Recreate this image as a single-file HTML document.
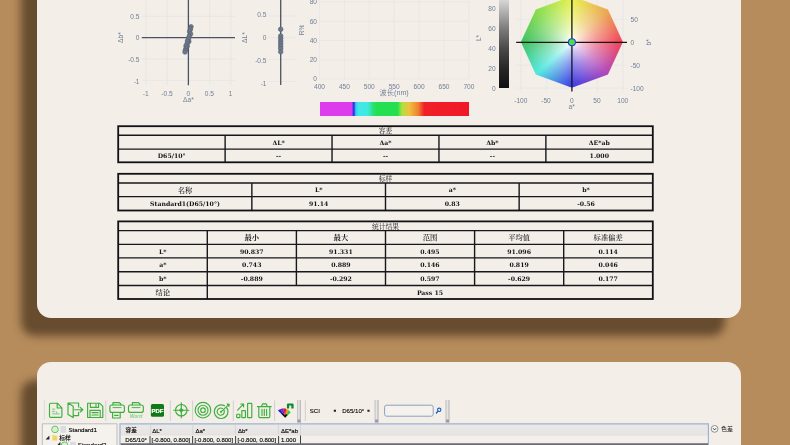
<!DOCTYPE html>
<html lang="zh">
<head>
<meta charset="utf-8">
<title>Color report</title>
<style>
html,body{margin:0;padding:0;}
body{width:790px;height:445px;overflow:hidden;background:#b68c5c;position:relative;font-family:"Liberation Sans","Noto Sans CJK SC",sans-serif;}
.card{position:absolute;background:#f3eee8;border-radius:14px;box-shadow:-16px 18px 9px rgba(30,18,5,0.52);}
#c1{left:37px;top:-40px;width:704px;height:358px;}
#c2{left:37px;top:362px;width:704px;height:140px;}
svg.full{position:absolute;left:0;top:0;width:790px;height:445px;overflow:hidden;will-change:transform;}
.ax{font-family:"Liberation Sans","Noto Sans CJK SC",sans-serif;font-size:6.6px;fill:#6f7f97;}
.tc{font-family:"DejaVu Serif","Liberation Serif","Noto Serif CJK SC",serif;font-weight:bold;font-size:6.2px;fill:#15151a;text-anchor:middle;}
.tt{font-family:"Liberation Serif","Noto Serif CJK SC",serif;font-size:6.8px;fill:#15151a;text-anchor:middle;}
.cj{font-family:"Liberation Serif","Noto Serif CJK SC",serif;font-weight:500;font-size:7.3px;fill:#15151a;text-anchor:middle;}
.cjb{font-family:"Liberation Serif","Noto Serif CJK SC",serif;font-size:7.3px;font-weight:bold;fill:#15151a;text-anchor:middle;}
#oct{position:absolute;left:520.9px;top:-8.7px;width:102px;height:102px;transform:scaleY(0.898);transform-origin:50% 50%;
 clip-path:polygon(50% 0,85.36% 14.64%,100% 50%,85.36% 85.36%,50% 100%,14.64% 85.36%,0 50%,14.64% 14.64%);
 background:radial-gradient(circle at 50% 50%,rgba(255,255,255,1) 0,rgba(255,255,255,0.74) 14%,rgba(255,255,255,0.47) 34%,rgba(255,255,255,0.17) 62%,rgba(255,255,255,0) 92%),
 conic-gradient(from 0deg,#e4ee30 0deg,#e89c38 45deg,#ee2840 90deg,#a42cb0 135deg,#2020e0 180deg,#38e4dc 225deg,#20b848 270deg,#78d834 315deg,#e4ee30 360deg);}
#lbar{position:absolute;left:498.5px;top:-12px;width:10.4px;height:99.8px;background:linear-gradient(to bottom,#fff 0,#d6d6d6 12%,#7e7e7e 40%,#4b4b4b 60%,#272727 80%,#101010 100%);}
#spec{position:absolute;left:319.7px;top:101.8px;width:149.2px;height:14px;
 background:linear-gradient(to right,#dc3cec 0,#dc3cec 21.6%,#2030e0 22.2%,#2848e8 23%,#38c8f0 24%,#40e8e8 26%,#40e8e0 32%,#28e070 36%,#22e050 38%,#22e050 52%,#b0e040 55%,#f0c040 60%,#f08030 66%,#f02028 70%,#f01828 100%);}
</style>
</head>
<body>
<div class="card" id="c1"></div>
<div class="card" id="c2"></div>
<svg class="full" viewBox="0 0 790 445">
<!-- chart 1 -->
<g stroke="#e4e2e4" stroke-width="0.7" fill="none">
<path d="M146 -10V85M167.2 -10V85M209.6 -10V85M230.8 -10V85"/>
<path d="M142 16.3H235M142 59H235M142 80.4H235"/>
<path d="M268 16H296M268 37.6H296M268 59.5H296M268 81.5H296"/>
</g>
<g stroke="#4a5365" stroke-width="1.3" fill="none">
<path d="M141.8 37.6H235M188.4 -5V85.3"/>
<path d="M280.7 -5V85"/>
</g>
<g fill="#6d7888" stroke="#566072" stroke-width="0.6">
<circle cx="191" cy="26.8" r="2.3"/><circle cx="190.4" cy="29.2" r="2.3"/><circle cx="189.6" cy="31.6" r="2.3"/><circle cx="190.6" cy="34" r="2.3"/><circle cx="189.2" cy="36.4" r="2.3"/><circle cx="188.6" cy="38.8" r="2.3"/><circle cx="188.8" cy="41.6" r="2.3"/><circle cx="187.4" cy="41" r="2.3"/><circle cx="187.2" cy="43.6" r="2.3"/><circle cx="187.2" cy="46.2" r="2.3"/><circle cx="186" cy="45.8" r="2.3"/><circle cx="186" cy="48.4" r="2.3"/><circle cx="185.4" cy="50.4" r="2.3"/><circle cx="185" cy="52" r="2.3"/>
<circle cx="280.7" cy="29.3" r="2.3"/><circle cx="280.7" cy="36" r="2.3"/><circle cx="280.7" cy="38.5" r="2.3"/><circle cx="280.7" cy="41" r="2.3"/><circle cx="280.7" cy="43.5" r="2.3"/><circle cx="280.7" cy="46" r="2.3"/><circle cx="280.7" cy="48.5" r="2.3"/><circle cx="280.7" cy="51.8" r="2.3"/>
</g>
<g class="ax" text-anchor="end">
<text x="139.5" y="18.8">0.5</text><text x="139.5" y="40">0</text><text x="139.5" y="62.3">-0.5</text><text x="139.5" y="83.8">-1</text>
<text x="266.5" y="17.1">0.5</text><text x="266.5" y="40">0</text><text x="266.5" y="62.6">-0.5</text><text x="266.5" y="86">-1</text>
</g>
<g class="ax" text-anchor="middle">
<text x="145.8" y="96">-1</text><text x="167" y="96">-0.5</text><text x="188.4" y="96">0</text><text x="209.4" y="96">0.5</text><text x="230.6" y="96">1</text>
<text x="188.4" y="102">Δa*</text>
<text transform="translate(123.4 37.6) rotate(-90)">Δb*</text>
<text transform="translate(247.2 37.6) rotate(-90)">ΔL*</text>
</g>
<!-- chart 3 spectrum -->
<g stroke="#e6e4e6" stroke-width="0.7" fill="none">
<path d="M319.5 -5V79M344.4 -5V79M369.3 -5V79M394.2 -5V79M419.1 -5V79M444 -5V79M468.9 -5V79"/>
<path d="M319.5 2H469M319.5 21.3H469M319.5 40.5H469M319.5 59.7H469M319.5 79H469"/>
</g>
<g class="ax" text-anchor="end">
<text x="317" y="4.4">80</text><text x="317" y="23.7">60</text><text x="317" y="42.9">40</text><text x="317" y="62.1">20</text><text x="317" y="81.4">0</text>
</g>
<g class="ax" text-anchor="middle">
<text x="319.5" y="89">400</text><text x="344.4" y="89">450</text><text x="369.3" y="89">500</text><text x="394.2" y="89">550</text><text x="419.1" y="89">600</text><text x="444" y="89">650</text><text x="468.9" y="89">700</text>
<text x="394.2" y="95.2" font-size="7.2">波长(nm)</text>
<text transform="translate(304 30) rotate(-90)">R%</text>
</g>
<!-- chart 4 lab -->
<g class="ax" text-anchor="end">
<text x="495.6" y="11">80</text><text x="495.6" y="30.8">60</text><text x="495.6" y="50.8">40</text><text x="495.6" y="70.8">20</text><text x="495.6" y="90.7">0</text>
</g>
<g stroke="#e6e4e6" stroke-width="0.7" fill="none">
<path d="M520.9 -5V92M546.4 -5V92M597.4 -5V92M622.9 -5V92"/>
<path d="M516 19.4H627M516 65.2H627M516 88.1H627"/>
</g>
<g class="ax" text-anchor="middle">
<text x="520.8" y="102.9">-100</text><text x="546" y="102.9">-50</text><text x="571.9" y="102.9">0</text><text x="596.9" y="102.9">50</text><text x="622.8" y="102.9">100</text>
<text x="571.7" y="108.6">a*</text>
<text transform="translate(480.8 38) rotate(-90)">L*</text>
<text transform="translate(651.4 42.3) rotate(-90)">b*</text>
</g>
<g class="ax" text-anchor="start">
<text x="630.5" y="21.8">50</text><text x="630.5" y="44.7">0</text><text x="630.5" y="67.6">-50</text><text x="630.5" y="90.5">-100</text>
</g>
</svg>
<div id="oct"></div>
<div id="lbar"></div>
<div id="spec"></div>
<svg class="full" viewBox="0 0 790 445">
<g stroke="#15151a" stroke-width="1.3" fill="none"><path d="M516.2 42.3H627M571.9 -5V91.6"/></g>
<circle cx="571.9" cy="42.3" r="3.5" fill="#48e040" stroke="#2838e0" stroke-width="1.1"/>
</svg>
<svg class="full" viewBox="0 0 790 445">
<path d="M118.2 135.2H652.8M118.2 149.1H652.8" stroke="#17171c" stroke-width="1.4" fill="none"/>
<path d="M225.12 135.2V162.3M332.04 135.2V162.3M438.96 135.2V162.3M545.88 135.2V162.3" stroke="#17171c" stroke-width="1.4" fill="none"/>
<rect x="118.2" y="126.2" width="534.5999999999999" height="36.10000000000001" stroke="#111116" stroke-width="1.8" fill="none"/>
<text class="tt" x="385.5" y="133.2">容差</text>

<text class="tc" x="278.6" y="144.7">ΔL*</text>
<text class="tc" x="385.5" y="144.7">Δa*</text>
<text class="tc" x="492.4" y="144.7">Δb*</text>
<text class="tc" x="599.3" y="144.7">ΔE*ab</text>
<text class="tc" x="171.7" y="158.3">D65/10°</text>
<text class="tc" x="278.6" y="158.3">--</text>
<text class="tc" x="385.5" y="158.3">--</text>
<text class="tc" x="492.4" y="158.3">--</text>
<text class="tc" x="599.3" y="158.3">1.000</text>
<path d="M118.2 183H652.8M118.2 196.6H652.8" stroke="#17171c" stroke-width="1.4" fill="none"/>
<path d="M251.85 183V210.5M385.50 183V210.5M519.15 183V210.5" stroke="#17171c" stroke-width="1.4" fill="none"/>
<rect x="118.2" y="173.8" width="534.5999999999999" height="36.69999999999999" stroke="#111116" stroke-width="1.8" fill="none"/>
<text class="tt" x="385.5" y="180.9">标样</text>
<text class="cj" x="185.0" y="192.5">名称</text>
<text class="tc" x="318.7" y="192.4">L*</text>
<text class="tc" x="452.3" y="192.4">a*</text>
<text class="tc" x="586.0" y="192.4">b*</text>
<text class="tc" x="185.0" y="206.2">Standard1(D65/10°)</text>
<text class="tc" x="318.7" y="206.2">91.14</text>
<text class="tc" x="452.3" y="206.2">0.83</text>
<text class="tc" x="586.0" y="206.2">-0.56</text>
<path d="M118.2 230.6H652.8M118.2 244.4H652.8M118.2 257.9H652.8M118.2 271.7H652.8M118.2 285.5H652.8" stroke="#17171c" stroke-width="1.4" fill="none"/>
<path d="M207.30 230.6V299M296.40 230.6V285.5M385.50 230.6V285.5M474.60 230.6V285.5M563.70 230.6V285.5" stroke="#17171c" stroke-width="1.4" fill="none"/>
<rect x="118.2" y="221.4" width="534.5999999999999" height="77.6" stroke="#111116" stroke-width="1.8" fill="none"/>
<text class="tt" x="385.5" y="228.5">统计结果</text>

<text class="cjb" x="251.8" y="240.2">最小</text>
<text class="cjb" x="340.9" y="240.2">最大</text>
<text class="cj" x="430.0" y="240.2">范围</text>
<text class="cj" x="519.1" y="240.2">平均值</text>
<text class="cj" x="608.2" y="240.2">标准偏差</text>
<text class="tc" x="162.8" y="253.7">L*</text>
<text class="tc" x="251.8" y="253.7">90.837</text>
<text class="tc" x="340.9" y="253.7">91.331</text>
<text class="tc" x="430.0" y="253.7">0.495</text>
<text class="tc" x="519.1" y="253.7">91.096</text>
<text class="tc" x="608.2" y="253.7">0.114</text>
<text class="tc" x="162.8" y="267.4">a*</text>
<text class="tc" x="251.8" y="267.4">0.743</text>
<text class="tc" x="340.9" y="267.4">0.889</text>
<text class="tc" x="430.0" y="267.4">0.146</text>
<text class="tc" x="519.1" y="267.4">0.819</text>
<text class="tc" x="608.2" y="267.4">0.046</text>
<text class="tc" x="162.8" y="281.2">b*</text>
<text class="tc" x="251.8" y="281.2">-0.889</text>
<text class="tc" x="340.9" y="281.2">-0.292</text>
<text class="tc" x="430.0" y="281.2">0.597</text>
<text class="tc" x="519.1" y="281.2">-0.629</text>
<text class="tc" x="608.2" y="281.2">0.177</text>
<text class="cj" x="162.8" y="294.9">结论</text>
<text class="tc" x="430.0" y="294.9">Pass 15</text>
</svg>
<svg class="full" viewBox="0 0 790 445">
<defs>
<linearGradient id="grip" x1="0" x2="1" y1="0" y2="0"><stop offset="0" stop-color="#b9b9bb"/><stop offset="0.45" stop-color="#e9e8e8"/><stop offset="1" stop-color="#b2b2b5"/></linearGradient>
<linearGradient id="hdr" x1="0" x2="0" y1="0" y2="1"><stop offset="0" stop-color="#ebe9e7"/><stop offset="1" stop-color="#e7e5e3"/></linearGradient>
</defs>
<!-- toolbar separators and grips -->
<path d="M44.4 400.5V420.5" stroke="#c9c6c2" stroke-width="1" stroke-dasharray="1 1"/>
<path d="M105.8 400.5V421M170.3 400.5V421M192.6 400.5V421M233.3 400.5V421M274.6 400.5V421M305.3 400.5V421" stroke="#cfccc9" stroke-width="0.9" fill="none"/>
<rect x="297" y="400" width="4" height="22.7" fill="url(#grip)"/>
<rect x="374.6" y="400" width="4" height="22.7" fill="url(#grip)"/>
<rect x="445.5" y="400" width="4" height="22.7" fill="url(#grip)"/>
<path d="M297.6 419.5h2.8v3h-2.8zM375.2 419.5h2.8v3h-2.8zM446.1 419.5h2.8v3h-2.8z" fill="#9a9a9e"/>
<!-- icons -->
<g fill="none" stroke="#3cb03c" stroke-width="1.15" stroke-linejoin="round" stroke-linecap="round">
<!-- doc -->
<path d="M50.6 403.2H57.4L61.9 407.8V416.2Q61.9 417.3 60.8 417.3H50.6Q49.5 417.3 49.5 416.2V404.3Q49.5 403.2 50.6 403.2ZM57.2 403.4V408H61.7"/>
<path d="M52.6 409.2h2M52.6 411.5h2M52.6 413.8h6.5M56.6 412v1.6" stroke="#8fd48f" stroke-width="1.3"/>
<!-- export -->
<path d="M68 403H78.6V407M78.6 412.4V415.6H73.4M68 403V414.4L73.2 417.6V406.2L68 403"/>
<path d="M74.6 409.7H82.4M80.2 407.4L82.8 409.7L80.2 412"/>
<!-- floppy -->
<path d="M87.6 403.2H99.6L102.8 406.4V417.5H87.6Z"/>
<path d="M90.4 403.4V407.4H98.6V403.4M96 404.4V406.2M90 417.3V410.4H100.2V417.3M92 412.6H98.2M92 415H98.2"/>
<!-- printer -->
<path d="M113 405V402.6H119.4L120.8 404V405"/>
<rect x="109.9" y="405" width="14.5" height="7.4" rx="2"/>
<path d="M112.6 412.6V418H120.2V412.6M114.6 415.4H118.2"/>
<path d="M113 407.6H121" stroke-width="0.9"/>
<!-- printer word -->
<path d="M132.4 405V402.6H138.6L140 404V405"/>
<rect x="128.5" y="405" width="14.8" height="7.4" rx="2"/>
<path d="M132 407.6H140" stroke-width="0.9"/>
<!-- crosshair -->
<circle cx="181.3" cy="410.2" r="5.7"/>
<path d="M173.8 410.2H188.8M181.3 402.7V417.7"/>
<!-- concentric -->
<circle cx="203" cy="410.2" r="7.8"/><circle cx="203" cy="410.2" r="5"/><circle cx="203" cy="410.2" r="2.3"/>
<!-- target arrow -->
<path d="M226.6 407.6A6.8 6.8 0 1 1 224.6 405.8"/>
<path d="M223.6 409.4A3.6 3.6 0 1 1 222.4 408.4"/>
<path d="M221 411.8L228.2 405.2"/>
<!-- bars -->
<rect x="236.7" y="414.2" width="3.2" height="3.4" rx="0.6"/>
<rect x="241.8" y="410.6" width="3.6" height="7" rx="0.4"/>
<rect x="247.6" y="403.4" width="4.2" height="14.2" rx="0.4"/>
<path d="M237.6 410.2L243.4 404.2M240.8 404H243.6V406.8"/>
<!-- trash -->
<path d="M257.4 406.6H271.2M261.6 406.2L262.6 403.8H266.2L267.2 406.2M258.8 407V416.6Q258.8 417.6 259.8 417.6H268.8Q269.8 417.6 269.8 416.6V407M262 409.2V415.4M264.3 409.2V415.4M266.6 409.2V415.4"/>
</g>
<path d="M181.3 407.6L182.5 409L183.9 410.2L182.5 411.4L181.3 412.8L180.1 411.4L178.7 410.2L180.1 409Z" fill="#3cb03c"/>
<circle cx="221" cy="411.8" r="1.1" fill="#3cb03c"/>
<path d="M227 403.8L229.4 404.2L229 406.6Z" fill="#3cb03c" stroke="#3cb03c" stroke-width="0.8"/>
<text x="136" y="418" font-family="Liberation Sans,sans-serif" font-style="italic" font-weight="bold" font-size="5" fill="#8ed08e" text-anchor="middle">Word</text>
<!-- pdf -->
<rect x="150.9" y="404" width="13.1" height="12.8" rx="1.6" fill="#0f7a16"/>
<text x="157.5" y="412.6" font-family="Liberation Sans,sans-serif" font-weight="bold" font-size="6" fill="#ffffff" stroke="#fff" stroke-width="0.2" text-anchor="middle">PDF</text>
<!-- palette -->
<g>
<path d="M285.2 417.4L277.9 410.6L280.5 408.9Z" fill="#1a20dc"/>
<path d="M285.2 417.4L280.5 408.9L283.3 408.3Z" fill="#8420c8"/>
<path d="M285.2 417.4L283.3 408.3L286.2 408.7Z" fill="#e41428"/>
<path d="M285.2 417.4L286.2 408.7L288.5 409.9Z" fill="#f09418"/>
<path d="M285.2 417.4L288.5 409.9L290.7 412.4Z" fill="#34c838"/>
<path d="M280.8 413.3L285.2 417.8L287.6 415L286 414L284.8 415.2L283 413.4Z" fill="#121212"/>
<path d="M286.9 408.5V404.6Q286.9 403.4 288.1 403.4H292.4Q293.6 403.4 293.6 404.6V408.5H291.3V405.6H289.2V408.5Z" fill="#0a8a2c"/>
</g>
<!-- combos -->
<g font-family="Liberation Sans,sans-serif" font-size="6.1" fill="#000" stroke="#000" stroke-width="0.1">
<text x="309.8" y="412.8">SCI</text>
<text x="342.2" y="412.8">D65/10°</text>
</g>
<path d="M333.8 409.8h2.2v2h-2.2zM367.4 409.8h2.2v2h-2.2z" fill="#222"/>
<rect x="384.6" y="405.2" width="48.6" height="11" rx="2" fill="#f5f2ee" stroke="#8aa0be" stroke-width="1"/>
<circle cx="439.2" cy="409.8" r="1.7" fill="none" stroke="#1f5fc4" stroke-width="1.1"/>
<path d="M438 411.2L436.4 413" stroke="#1f5fc4" stroke-width="1.3" stroke-linecap="round"/>
<!-- tree panel -->
<path d="M42.3 445V423.8H117V445" fill="#f5f2ee" stroke="#b7b7bd" stroke-width="0.9"/>
<circle cx="55" cy="429.4" r="3.3" fill="#d6f0d4" stroke="#62c862" stroke-width="1"/>
<rect x="60.4" y="426" width="5.8" height="6.8" fill="#dcdce0"/>
<path d="M49.4 435.6V439.4H45.6Z" fill="#222"/>
<path d="M52.4 435h1.8l0.6 0.8h2.4v4.8h-4.8z" fill="#f2d465"/>
<path d="M60.4 441.8V445H57.4Z" fill="#222"/>
<circle cx="64.6" cy="445.2" r="3.3" fill="#d6f0d4" stroke="#62c862" stroke-width="1"/>
<rect x="70" y="441.8" width="5.8" height="4" fill="#dcdce0"/>
<g font-family="Liberation Sans,Noto Sans CJK SC,sans-serif" font-size="6.2" fill="#000" stroke="#000" stroke-width="0.12">
<text x="68.4" y="431.7">Standard1</text>
<text x="59.2" y="439.6" font-size="5.8">标样</text>
<text x="77.8" y="447.4">Standard2</text>
</g>
<!-- grid panel -->
<rect x="120" y="423.8" width="588.4" height="30" fill="#f3efea"/>
<rect x="120" y="423.8" width="588.4" height="11" fill="url(#hdr)"/>
<path d="M120 445V423.8H708.4V445" fill="none" stroke="#9db3d0" stroke-width="1.2"/>
<path d="M150.6 424.6V434.6M192.8 424.6V434.6M235.4 424.6V434.6M278.4 424.6V434.6M300.6 424.6V434.6" stroke="#cfcfd4" stroke-width="0.8"/>
<path d="M120.6 434.9H708" stroke="#dcdad8" stroke-width="0.7"/>
<path d="M150 436V444M192.6 436V444M235.6 436V444M278.6 436V444M300.5 435.5V445" stroke="#2a2a2e" stroke-width="0.9"/>
<path d="M120.6 444.2H708" stroke="#6c6c70" stroke-width="1.8"/>
<g font-family="Liberation Sans,Noto Sans CJK SC,sans-serif" font-size="6" fill="#000" stroke="#000" stroke-width="0.12">
<text x="125.6" y="432.4" font-size="5.6">容差</text>
<text x="152.2" y="432.6">ΔL*</text><text x="195.4" y="432.6">Δa*</text><text x="238" y="432.6">Δb*</text><text x="281" y="432.6">ΔE*ab</text>
<text x="125.2" y="442.3">D65/10°</text>
<text x="151.6" y="442.3">[-0.800, 0.800]</text><text x="194.4" y="442.3">[-0.800, 0.800]</text><text x="237.4" y="442.3">[-0.800, 0.800]</text><text x="281" y="442.3">1.000</text>
</g>
<!-- right -->
<circle cx="714.6" cy="428.9" r="3.4" fill="#f8f6f4" stroke="#77777c" stroke-width="0.8"/>
<path d="M713.2 428.3L714.6 429.9L716 428.3" fill="none" stroke="#222" stroke-width="0.9"/>
<text x="721" y="431.1" font-family="Liberation Sans,Noto Sans CJK SC,sans-serif" font-size="6" fill="#222">色差</text>
</svg>
</body>
</html>
